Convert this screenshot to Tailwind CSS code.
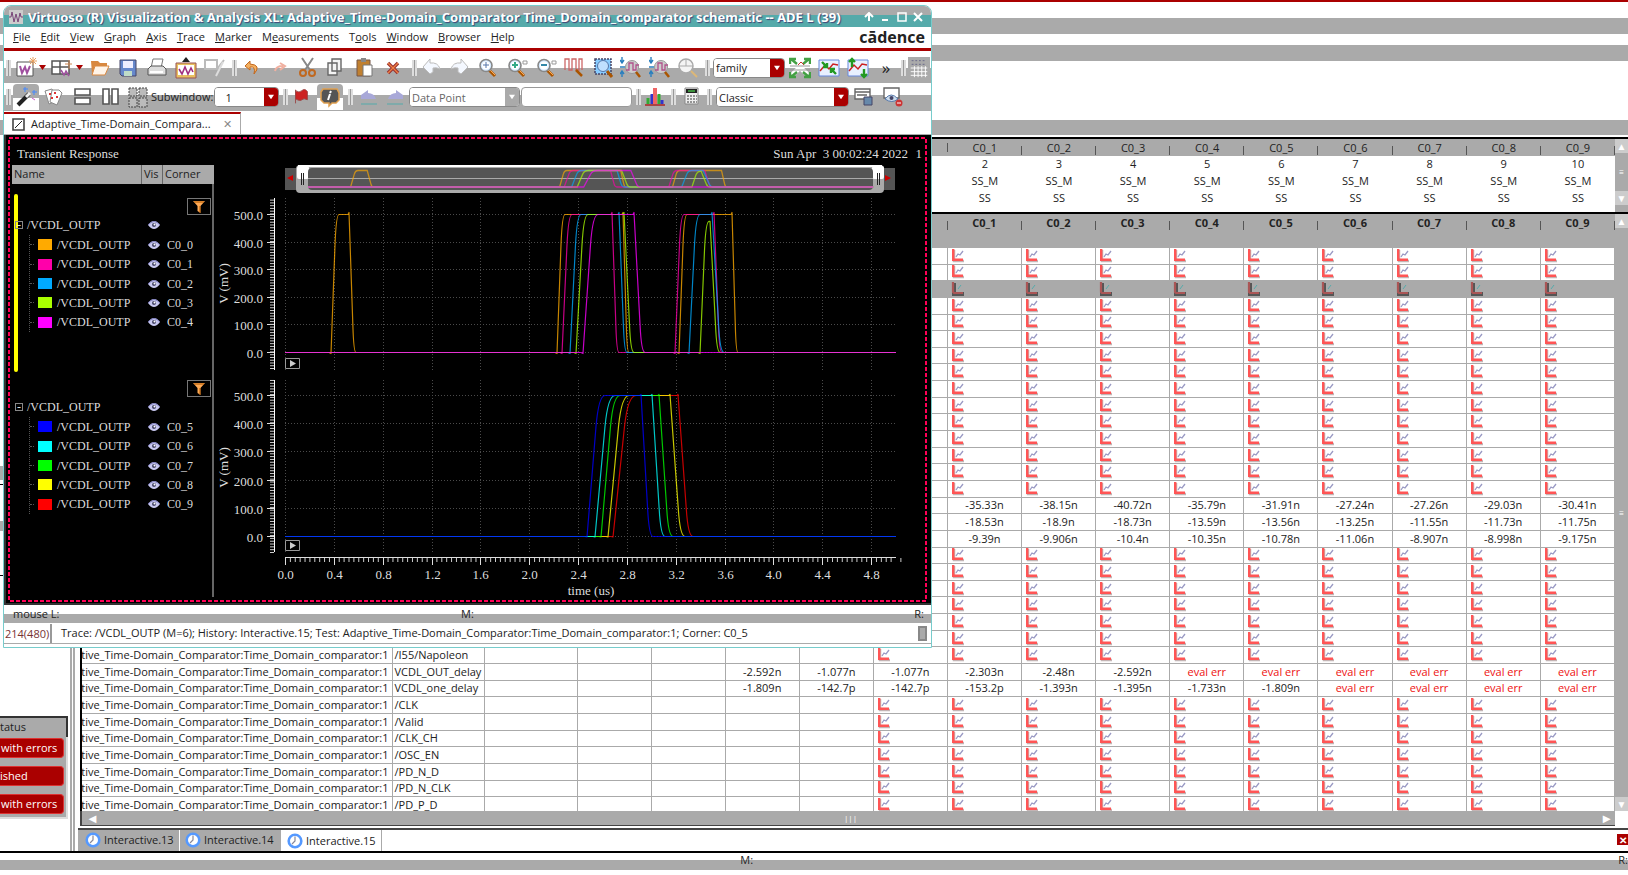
<!DOCTYPE html>
<html lang="en">
<head>
<meta charset="utf-8">
<title>Virtuoso Visualization &amp; Analysis XL</title>
<script src="https://cdn.jsdelivr.net/npm/@tailwindcss/browser@4"></script>
</head>
<body class="h-screen overflow-hidden bg-white">
<svg class="hidden">
  <symbol id="wave" viewBox="0 0 14 14"><path d="M3 1v11h10" fill="none" stroke="#c4b4b4" stroke-width="2.500"/><path d="M1 0h2.400v9.600H12V12H1z" fill="#ff5555"/><path d="M5 8l2-3 2 1 3-4" fill="none" stroke="#9a9ac4" stroke-width="1.300"/></symbol>
  <symbol id="waveSel" viewBox="0 0 14 14"><path d="M3 1v11h10" fill="none" stroke="#555" stroke-width="4"/><path d="M2 0v10l1 1h9" fill="none" stroke="#aa5555" stroke-width="2.200"/><path d="M7 7l3-4" stroke="#55aaaa"/></symbol>
  <symbol id="eye" viewBox="0 0 12 8"><path d="M0 4q6-8 12 0q-6 8-12 0" fill="#c8c8f0"/><path d="M0 4q6-7 12 0" fill="none" stroke="#7878b8"/><circle cx="6" cy="4" r="2" fill="#446"/><circle cx="6.500" cy="3.500" r="1" fill="#fff"/></symbol>
  <symbol id="funnel" viewBox="0 0 12 12"><path d="M0 0h12L7.500 5v7l-3-2V5z" fill="#ffaa55"/><path d="M7 5v7M1 1h10" stroke="#aa5500"/></symbol>
  <symbol id="clock" viewBox="0 0 16 16"><circle cx="8" cy="8" r="6.300" fill="#fff" stroke="#5599ff" stroke-width="2.600"/><path d="M8 3.500V8l-3 3" fill="none" stroke="#889" stroke-width="1.200"/></symbol>
  <symbol id="lens" viewBox="0 0 22 22"><path d="M12 13l6 6" stroke="#aa5500" stroke-width="3"/><path d="M12 12l6 6" stroke="#ffaa55"/><circle cx="9" cy="8.500" r="6" fill="#d5eaff" stroke="#888" stroke-width="1.600"/><circle cx="9" cy="8.500" r="4" fill="#fff"/></symbol>
  <symbol id="pulses" viewBox="0 0 22 22"><path d="M2 13V2h4v11h3V2h4v11h3V2h3v11" fill="none" stroke="#c66" stroke-width="1.300"/><path d="M13 13l6 6" stroke="#aa5500" stroke-width="2.500"/></symbol>
  <symbol id="pulseZoom" viewBox="0 0 22 22"><path d="M2 0v5M0 3l2 3 2-3M2 20v-5M0 17l2-3 2 3M0 10h5" fill="none" stroke="#2a7fbf" stroke-width="1.400"/><circle cx="12" cy="10" r="6.500" fill="#ccc" stroke="#999"/><path d="M6 13h3V6h4v7h3V8h3" fill="none" stroke="#b0508a" stroke-width="1.300"/><path d="M16 15l4 5" stroke="#aa5500" stroke-width="2.500"/></symbol>
</svg>

<div class="relative flex h-full flex-col bg-white font-['Open_Sans','Noto_Sans',sans-serif] text-[11px] leading-[14px] text-[#222]">
  <!-- results window -->
  <header class="shrink-0">
    <div class="h-[2px] bg-[#aa0000]"></div>
    <div class="mt-[16px] h-[16px] bg-[#aaa]"></div>
    <div class="mt-[11px] h-[16px] bg-[#aaa]"></div>
    <div class="mt-[59px] h-[15px] bg-[#aaa]"></div>
  </header>
  <main class="mt-[2px] flex min-h-0 flex-1 border-b-2 border-black">
    <aside class="flex w-[70px] shrink-0 flex-col">
      <div class="mt-[329px] h-[14px] bg-[#aaa]"></div>
      <div class="mt-[4px] h-px bg-black"></div>
      <div class="mt-[36px] h-[10px] bg-[#aaa]"></div>
      <div class="mt-[44px] h-px bg-black"></div>
      <section class="mt-auto mb-[32px] mr-[2px] flex flex-col bg-[#aaa]">
        <h2 class="h-[21px] border-t-2 border-r-2 border-[#333] pt-[2px]">tatus</h2>
        <div class="flex flex-col gap-[8px] border-r-2 border-b-2 border-[#ddd] pr-[2px] pb-[3px] pt-[1px] whitespace-nowrap text-white">
          <button class="h-[20px] rounded-r border border-l-0 border-[#d33] bg-[#aa0000] pl-px text-left">with errors</button>
          <button class="h-[20px] rounded-r border border-l-0 border-[#d33] bg-[#aa0000] text-left">ished</button>
          <button class="h-[20px] rounded-r border border-l-0 border-[#d33] bg-[#aa0000] pl-px text-left">with errors</button>
        </div>
      </section>
    </aside>
    <div class="mr-[3px] w-[5px] border-x-2 border-[#aaa]"></div>
    <section class="flex min-w-0 flex-1 flex-col">
      <div class="ml-[2px] flex h-[75px] border-t-2 border-l-2 border-black">
        <div class="min-w-0 flex-1"><table class="h-[67px] w-full table-fixed border-collapse text-center" id="corners"></table></div>
        <div class="flex w-[13px] flex-col items-center justify-between bg-[#aaa]">
          <button aria-label="Scroll up" class="w-full bg-[#ccc] text-[10px] text-white">▲</button>
          <span class="text-[8px] leading-[8px] text-white">≡</span>
          <button aria-label="Scroll down" class="mb-[7px] w-full bg-[#ccc] text-[10px] text-white">▼</button>
        </div>
      </div>
      <div class="ml-[2px] flex min-h-0 flex-1 border-t-2 border-l-2 border-black">
        <div class="min-w-0 flex-1 overflow-hidden">
          <table class="w-full table-fixed border-collapse text-center" id="resultHead"></table>
          <table class="h-[567px] w-full table-fixed border-collapse text-center" id="results"></table>
        </div>
        <div class="flex w-[13px] flex-col items-center justify-between bg-[#aaa]">
          <button aria-label="Scroll up" class="w-full bg-[#ccc] text-[10px] text-white">▲</button>
          <span class="text-[8px] leading-[8px] text-white">≡</span>
          <button aria-label="Scroll down" class="w-full bg-[#ccc] text-[10px] text-white">▼</button>
        </div>
      </div>
      <div class="ml-[2px] mr-[13px] flex h-[15px] shrink-0 items-center justify-between border-b border-l-2 border-[#444] bg-[#aaa] text-[13px] text-white">
        <button aria-label="Scroll left" class="px-[4px]">◄</button><span class="text-[8px]">|||</span><button aria-label="Scroll right" class="px-[2px]">►</button>
      </div>
      <nav class="mt-[2px] flex h-[23px] shrink-0 border-t-2 border-[#444]">
        <button class="flex w-[102px] items-center gap-[3px] border-r border-white bg-[#aaa] pb-[2px] pl-[7px]"><svg class="size-[16px] shrink-0"><use href="#clock"/></svg>Interactive.13</button>
        <button class="flex w-[101px] items-center gap-[3px] bg-[#aaa] pb-[2px] pl-[5px]"><svg class="size-[16px] shrink-0"><use href="#clock"/></svg>Interactive.14</button>
        <button class="flex w-[101px] items-center gap-[3px] border-r border-[#aaa] pl-[6px]"><svg class="size-[16px] shrink-0"><use href="#clock"/></svg>Interactive.15</button>
        <button aria-label="Close" class="mt-[4px] ml-auto flex size-[11px] items-center justify-center bg-[#aa0000] text-[10px] font-bold text-white">✕</button>
      </nav>
    </section>
  </main>
  <footer class="mb-[5px] flex h-[17px] shrink-0 items-start bg-[linear-gradient(#fff_7px,#aaa_7px)]">
    <span class="flex-1"></span><span class="w-[878px] shrink-0">M:</span><span>R:</span>
  </footer>

  <!-- graph window -->
  <article class="absolute top-[5px] left-[3px] flex h-[643px] w-[929px] flex-col overflow-hidden rounded-t-[8px] border border-[#7cc] bg-white">
    <div class="flex h-[21px] shrink-0 items-center bg-[linear-gradient(#aaa_9px,#55aaaa_9px)] pr-[8px] pl-[5px] text-white">
      <svg class="mr-[5px] size-[14px]" viewBox="0 0 14 14"><path d="M0 0h14v14H0z" fill="#ccc"/><path d="M0 7h2l1-5 2 10 2-8 2 8 2-9 1 4h2" fill="none" stroke="#747"/></svg>
      <h1 class="flex-1 overflow-hidden font-['Noto_Sans',sans-serif] text-[13px] leading-[18px] font-bold whitespace-nowrap [text-shadow:1px_1px_1px_#447]">Virtuoso (R) Visualization &amp; Analysis XL: Adaptive_Time-Domain_Comparator Time_Domain_comparator schematic -- ADE L (39)</h1>
      <div class="flex w-[67px] items-center justify-between pl-[8px]">
        <button aria-label="Shade"><svg class="size-[10px]" viewBox="0 0 10 10"><path d="M5 9V2M1 5l4-4 4 4" fill="none" stroke="#fff" stroke-width="2"/></svg></button>
        <button aria-label="Minimize"><svg class="size-[10px]" viewBox="0 0 10 10"><path d="M2 8h6" stroke="#fff" stroke-width="2"/></svg></button>
        <button aria-label="Maximize"><svg class="size-[10px]" viewBox="0 0 10 10"><path d="M1 1h8v8H1z" fill="none" stroke="#fff" stroke-width="1.500"/></svg></button>
        <button aria-label="Close"><svg class="size-[10px]" viewBox="0 0 10 10"><path d="M1 1l8 8M9 1L1 9" stroke="#fff" stroke-width="2"/></svg></button>
      </div>
    </div>
    <nav class="flex h-[24px] shrink-0 items-center gap-[10px] border-b-[3px] border-[#aa0000] pr-[6px] pb-px pl-[9px]">
      <button><u>F</u>ile</button><button><u>E</u>dit</button><button><u>V</u>iew</button><button><u>G</u>raph</button><button><u>A</u>xis</button><button><u>T</u>race</button><button><u>M</u>arker</button><button>M<u>e</u>asurements</button><button>T<u>o</u>ols</button><button><u>W</u>indow</button><button><u>B</u>rowser</button><button><u>H</u>elp</button>
      <span class="ml-auto text-[16px] leading-[16px] font-bold text-[#222]">cādence</span>
    </nav>
    <div id="bar1" class="mt-px flex h-[31px] shrink-0 items-center bg-[linear-gradient(#fff_16px,#aaa_16px)]"></div>
    <div id="bar2" class="flex h-[28px] shrink-0 items-center bg-[linear-gradient(#fff_12px,#aaa_12px)]"></div>
    <div class="mt-px flex h-[23px] shrink-0 border-b border-[#aaa]">
      <div class="flex w-[237px] items-center border-t-2 border-r border-t-[#aa0000] border-r-[#aaa] pr-[8px] pl-[8px]">
        <svg class="mr-[6px] size-[13px]" viewBox="0 0 13 13"><path d="M1 1h11v11H1z" fill="#fff" stroke="#444" stroke-width="1.600"/><path d="M3 10l7-7" stroke="#222"/></svg>
        <span class="flex-1">Adaptive_Time-Domain_Compara...</span>
        <button aria-label="Close tab" class="text-[11px] text-[#888]">✕</button>
      </div>
    </div>
    <div class="relative flex min-h-0 flex-1 border-l-2 border-b-2 border-[#333] bg-black font-['Liberation_Serif',serif] text-[12px] text-[#ddd]">
      <svg class="pointer-events-none absolute top-[2px] left-[2px] h-[465px] w-[920px]"><rect x="1" y="1" width="917" height="463" fill="none" stroke="#ff0055" stroke-width="2" stroke-dasharray="4 2"/></svg>
      <section class="flex w-[208px] shrink-0 flex-col pl-[6px]">
        <h2 class="mt-[12px] h-[18px] pl-[5px] text-[13px]">Transient Response</h2>
        <div class="flex h-[19px] bg-[#aaa] font-['Open_Sans',sans-serif] text-[11px] leading-[17px] text-[#222]"><span class="w-[130px] border-r border-[#666] pl-[2px]">Name</span><span class="w-[21px] border-r border-[#666] pl-[2px]">Vis</span><span class="pl-[2px]">Corner</span></div>
        <div id="legend" class="flex h-[413px] flex-col border-r-2 border-[#666]"></div>
      </section>
      <svg id="plot" class="h-[468px] w-[712px]" viewBox="214 135 712 468" font-size="13" fill="#ddd"></svg>
    </div>
    <div class="flex h-[18px] shrink-0 items-start bg-[linear-gradient(#fff_9px,#aaa_9px)] pt-[2px] pr-[7px]"><span class="w-[457px] pl-[9px]">mouse L:</span><span>M:</span><span class="ml-auto">R:</span></div>
    <div class="flex h-[21px] shrink-0 items-center border-b border-[#aaa] pl-px"><span class="w-[47px] border-r-2 border-[#999] leading-[19px] text-[#733]">214(480)</span><span class="flex-1 pl-[9px]">Trace: /VCDL_OUTP (M=6); History: Interactive.15; Test: Adaptive_Time-Domain_Comparator:Time_Domain_comparator:1; Corner: C0_5</span><span class="mr-[4px] h-[15px] w-[9px] border-2 border-[#888] bg-[#aaa]"></span></div>
    <div class="h-[3px] shrink-0"></div>
  </article>
</div>

<script>
const $ = id => document.getElementById(id);
const cols = '<colgroup><col class="w-[310px]"><col class="w-[92px]"><col class="w-[93px]">' + '<col>'.repeat(14) + '</colgroup>';
const names = ['', '', '', '', '', '', '', '', 'C0_1', 'C0_2', 'C0_3', 'C0_4', 'C0_5', 'C0_6', 'C0_7', 'C0_8', 'C0_9'];

/* corner summary */
const cornerRow = f => '<tr>' + names.map((n, i) => `<td class="p-0">${i > 7 ? f(i - 6) : ''}</td>`).join('') + '</tr>';
$('corners').innerHTML = cols + '<thead><tr class="h-[17px] bg-[#aaa]">' + names.map(n => `<th class="p-0 font-normal"><div class="flex items-end"><span class="flex-1 pl-px">${n}</span><span class="h-[9px] w-px bg-[#555]"></span></div></th>`).join('') + '</tr></thead><tbody>' +
  cornerRow(i => i) + cornerRow(() => 'SS_M') + cornerRow(() => 'SS') + '</tbody>';
$('resultHead').innerHTML = cols + '<thead><tr class="bg-[#aaa]">' + names.map(n => `<th class="p-0 pb-[17px] font-bold"><div class="flex h-[16px] items-end"><span class="flex-1">${n}</span><span class="h-[9px] w-px bg-[#555]"></span></div></th>`).join('') + '</tr></thead>';

/* results */
const E = 'eval err';
const values = {
  15: [,,,,, '-35.33n', '-38.15n', '-40.72n', '-35.79n', '-31.91n', '-27.24n', '-27.26n', '-29.03n', '-30.41n'],
  16: [,,,,, '-18.53n', '-18.9n', '-18.73n', '-13.59n', '-13.56n', '-13.25n', '-11.55n', '-11.73n', '-11.75n'],
  17: [,,,,, '-9.39n', '-9.906n', '-10.4n', '-10.35n', '-10.78n', '-11.06n', '-8.907n', '-8.998n', '-9.175n'],
  25: [,, '-2.592n', '-1.077n', '-1.077n', '-2.303n', '-2.48n', '-2.592n', E, E, E, E, E, E],
  26: [,, '-1.809n', '-142.7p', '-142.7p', '-153.2p', '-1.393n', '-1.395n', '-1.733n', '-1.809n', E, E, E, E]
};
const outputs = ['/I55/Napoleon', 'VCDL_OUT_delay', 'VCDL_one_delay', '/CLK', '/Valid', '/CLK_CH', '/OSC_EN', '/PD_N_D', '/PD_N_CLK', '/PD_P_D'];
let rows = '';
for (let r = 0; r < 34; r++) {
  const sel = r === 2, named = r >= 24;
  rows += `<tr class="${sel ? 'bg-[#aaa]' : 'bg-white'}"><td class="overflow-hidden border border-l-0 border-[#aaa] p-0"><div class="flex justify-end pr-[3px] whitespace-nowrap">${named ? 'ptive_Time-Domain_Comparator:Time_Domain_comparator:1' : ''}</div></td>` +
    `<td class="border border-[#aaa] p-0 pl-[2px] text-left whitespace-nowrap">${named ? outputs[r - 24] : ''}</td><td class="border border-[#aaa] p-0"></td>`;
  for (let c = 0; c < 14; c++) {
    let v = '';
    if (values[r]) v = values[r][c] || '';
    else if (c > 3) v = `<svg class="ml-[3px] block size-[14px]"><use href="${sel ? '#waveSel' : '#wave'}"/></svg>`;
    rows += `<td class="border border-[#aaa] p-0 ${v === E ? 'text-[#ee1111]' : ''}">${v}</td>`;
  }
  rows += '</tr>';
}
$('results').innerHTML = cols + '<tbody>' + rows + '</tbody>';

/* legend */
const groups = [
  ['#ffaa00', '#ff00aa', '#00aaff', '#aaff00', '#ff00ff'],
  ['#0000ff', '#00ffff', '#00ff00', '#ffff00', '#ff0000']
];
$('legend').innerHTML = groups.map((g, k) => `
  <div class="flex ${k ? 'mt-[18px]' : 'mt-[10px]'}"><div class="w-[4px] ml-[2px] shrink-0 rounded ${k ? 'bg-black h-px' : 'bg-[#ffff00] h-[178px] -mb-[14px]'}"></div>
  <div class="-ml-[6px] flex h-[164px] flex-1 flex-col">
    <button aria-label="Filter" class="mt-[4px] mr-px flex h-[17px] w-[24px] items-center justify-center self-end border border-[#777]"><svg class="size-[12px]"><use href="#funnel"/></svg></button>
    <div class="flex h-[19px] items-center"><button aria-label="Collapse" class="ml-[3px] flex size-[8px] items-center justify-center border border-[#888] leading-[6px]">-</button><span class="ml-[4px] w-[121px]">/VCDL_OUTP</span><svg class="h-[8px] w-[12px]"><use href="#eye"/></svg></div>
    <div class="mt-px ml-[17px] flex h-[97px] flex-col border-l border-dotted border-[#555]">` +
  g.map((c, i) => `<div class="flex flex-1 items-center"><span class="mr-[4px] w-[4px] border-t border-dotted border-[#555]"></span><span class="h-[11px] w-[14px]" style="background:${c}"></span><span class="ml-[5px] w-[91px]">/VCDL_OUTP</span><svg class="h-[8px] w-[12px]"><use href="#eye"/></svg><span class="ml-[7px]">C0_${k * 5 + i}</span></div>`).join('') +
  `</div></div></div>`).join('');

/* plot */
let s = '';
const line = (x1, y1, x2, y2, c, extra = '') => s += `<path d="M${x1} ${y1}L${x2} ${y2}" stroke="${c}" fill="none" ${extra}/>`;
const text = (x, y, t, a = 'middle', extra = '') => s += `<text x="${x}" y="${y}" text-anchor="${a}" ${extra}>${t}</text>`;
text(908, 158, 'Sun Apr&#160; 3 00:02:24 2022', 'end'); text(922, 158, '1', 'end');

const X = t => Math.round(285 + t * 122.1) + .5;
const strips = [{ y0: 352.5, y5: 214.5, top: 198, bot: 370 }, { y0: 536.5, y5: 395.5, top: 380, bot: 552 }];
for (const p of strips) {
  const step = (p.y0 - p.y5) / 5;
  for (let i = 0; i <= 12; i++) line(X(i * .4), p.top, X(i * .4), p.bot, '#4a4a4a', 'stroke-dasharray="1 2"');
  for (let i = 0; i <= 5; i++) {
    const y = Math.round(p.y0 - i * step - .5) + .5;
    line(285, y, 896, y, '#4a4a4a', 'stroke-dasharray="1 2"');
    line(267, y, 274, y, '#ddd');
    text(263, y + 5, i * 100 + '.0', 'end');
  }
  line(274.5, p.top, 274.5, p.bot, '#fff');
  for (let y = p.y0 + 16; y > p.top; y -= step / 10) line(270, y, 274, y, '#ccc');
  text(0, 0, 'V (mV)', 'middle', `transform="translate(228 ${p.y0 - 69}) rotate(-90)"`);
  s += `<path d="M285.500 ${p.bot - 11.5}h14v10h-14z" fill="#000" stroke="#999"/><path d="M290 ${p.bot - 10}l6 3.500l-6 3.500z" fill="#ccc"/>`;
}
line(285, 557.5, 896, 557.5, '#ddd');
for (let i = 1; i <= 126; i++) if (i !== 125 && i % 10) line(285.5 + i * 4.884, 558, 285.5 + i * 4.884, 562, '#ccc');
for (let i = 0; i <= 12; i++) { line(X(i * .4), 558, X(i * .4), 565, '#ddd'); text(X(i * .4), 579, (i * .4).toFixed(1)); }
text(591, 595, 'time (us)');

/* each pulse: rise start, rise end, fall start, fall end, peak level */
const traces = [
  [0, '#ffaa00', [[331, 339, 349, 356], [557, 565, 623, 629], [679, 687, 732, 738]]],
  [0, '#ff00aa', [[562, 572, 612, 619], [675, 684, 714, 722]]],
  [0, '#00aaff', [[570, 581, 619, 627], [689, 700, 712, 724]]],
  [0, '#aaff00', [[576, 588, 624, 634], [700, 709, 710, 720, .95]]],
  [0, '#ff00ff', [[583, 598, 634, 645]]],
  [1, '#ff0000', [[613, 636, 678, 693]]],
  [1, '#ffff00', [[608, 629, 670, 685]]],
  [1, '#00ff00', [[601, 620, 659, 673]]],
  [1, '#00ffff', [[595, 615, 652, 665]]],
  [1, '#0000ff', [[587, 605, 641, 653]]]
];
const wave = (ps, y0, h, fx, spike) => {
  let d = `M${fx(285)} ${y0}`;
  for (const [a, b, c, e, k = 1] of ps) {
    const t = y0 - h * k, w = b - a, v = e - c, m = a + w * .5, n = c + v * .55;
    d += `H${fx(a - 2)}L${fx(a)} ${y0 + spike / 2}L${fx(m)} ${y0 - h * k * .78}Q${fx(m + w * .15)} ${t} ${fx(b)} ${t}H${fx(c - 1)}L${fx(c)} ${t - (k < 1 ? 0 : spike)}L${fx(n)} ${y0 - h * .2}Q${fx(n + v * .12)} ${y0} ${fx(e)} ${y0}`;
  }
  return d + `H${fx(896)}`;
};
for (const [k, c, ps] of traces) s += `<path d="${wave(ps, strips[k].y0, strips[k].y0 - strips[k].y5, x => x, k ? 1 : 2)}" fill="none" stroke="${c}" stroke-width="1.200" stroke-linejoin="round" opacity=".78"/>`;

/* range slider */
s += '<rect x="285" y="168" width="610" height="22" fill="#555"/><rect x="296" y="165" width="588" height="28" rx="4" fill="#aaa"/><rect x="298" y="165" width="584" height="2" fill="#fff"/><rect x="297" y="166" width="12" height="13" rx="2" fill="#fff"/><rect x="872" y="166" width="12" height="13" rx="2" fill="#fff"/><rect x="308" y="168" width="565" height="22" rx="4" fill="#555"/><path d="M308 178.500h565" stroke="#aaa"/><path d="M301.500 173v12M303.500 173v12M877.500 173v12M879.500 173v12" stroke="#222"/><path d="M293 175v6l-6-3zM885 175v6l6-3z" fill="#cc0000"/>';
for (const [k, c, ps] of traces) if (!k) s += `<path d="${wave(ps, 187, 16.5, x => (308 + (x - 285) * .925).toFixed(1), 0)}" fill="none" stroke="${c}" opacity=".65" stroke-width="1.300"/>`;
$('plot').innerHTML = s;

/* toolbars */
const svg = (b, vb = '0 0 22 22') => `<svg class="size-[22px]" viewBox="${vb}">${b}</svg>`;
const use = id => svg(`<use href="#${id}"/>`);
const btn = (label, icon, w) => `<button aria-label="${label}" class="${w || 'w-[29px]'} flex shrink-0 items-center justify-center">${icon}</button>`;
const handle = (w = 'w-[11px]') => `<span class="${w} flex shrink-0 justify-center"><span class="h-[16px] w-[5px] border-x-2 border-[#ddd] bg-[#999]"></span></span>`;
const drop = () => `<button aria-label="More" class="flex w-[9px] shrink-0 justify-center"><svg class="size-[7px]" viewBox="0 0 7 7"><path d="M0 1h7L3.500 6z" fill="#aa0000"/></svg></button>`;
const select = (label, v, w, red = true) => `<span class="${w} flex h-[20px] shrink-0 overflow-hidden rounded border border-[#888] bg-white"><select aria-label="${label}" class="min-w-0 flex-1 appearance-none bg-white pl-[2px] text-[11px] leading-[17px] ${red ? 'text-[#222]' : 'text-[#666]'}"><option>${v}</option></select><span class="${red ? 'bg-[#aa0000]' : 'bg-[#aaa]'} flex w-[14px] items-center justify-center"><svg class="size-[6px]" viewBox="0 0 7 7"><path d="M0 1h7L3.500 6z" fill="#fff"/></svg></span></span>`;
const arrowBox = (p, c = '#229922') => `<path d="M1 3h20v16H1z" fill="#e8f0ff" stroke="#6688dd"/><path d="M2 14l5-6 4 4 4-5 5 1" fill="none" stroke="#c22" stroke-width="1.500"/><path d="${p}" fill="none" stroke="${c}" stroke-width="2.400"/>`;

$('bar1').innerHTML =
  handle('w-[9px]') +
  btn('New window', svg('<path d="M2 5h16v14H2z" fill="#fff" stroke="#555"/><path d="M5 9l2 7 3-6 2 6 3-7" fill="none" stroke="#a050a0" stroke-width="2"/><path d="M18 0v8M14 4h8M15 1l6 6M21 1l-6 6" stroke="#e8a060"/>'), 'w-[25px]') + drop() +
  btn('New subwindow', svg('<path d="M2 4h17v13H2zM2 10h17M10 4v13" fill="#fff" stroke="#555" stroke-width="1.500"/><path d="M11 13l3 5 2-4 3 5" fill="none" stroke="#a050a0" stroke-width="1.500"/><path d="M19 3v9M15 7h7" stroke="#c85"/>'), 'w-[28px]') + drop() +
  btn('Open', svg('<path d="M3 4h7l2 2h7v3H7L4 17z" fill="#d88840"/><path d="M7 9h14l-4 9H4z" fill="#fff4e8" stroke="#d88840"/>')) +
  btn('Save', svg('<path d="M3 3h16v16H5l-2-2z" fill="#6688cc" stroke="#446"/><path d="M6 4h10v7H6z" fill="#eef"/><path d="M7 14h8v5H7z" fill="#bfdcc8"/>')) +
  btn('Print', svg('<path d="M7 2h10l-2 9H5z" fill="#fff" stroke="#777"/><path d="M2 12l3-3h12l3 3v6H2z" fill="#ddd" stroke="#555"/><path d="M4 15h13" stroke="#fff" stroke-width="2"/>')) +
  btn('Save image', svg('<path d="M11 0l4 5H7z" fill="#222"/><path d="M1 6h20v15H1z" fill="#e8c060" stroke="#955"/><path d="M3 8h16v10H3z" fill="#fff"/><path d="M4 12l3 5 3-7 3 7 3-6 2 4" fill="none" stroke="#a03080" stroke-width="1.600"/>')) +
  btn('Annotate', svg('<path d="M1 3h12v9H1zM13 12l7-9" fill="none" stroke="#bbb" stroke-width="2"/><path d="M12 19l7-14" stroke="#ddd" stroke-width="2"/>')) +
  handle('w-[10px]') +
  btn('Undo', svg('<path d="M9 4L4 9l5 4V10q6-1 4 7q8-9-4-10z" fill="#f4b060" stroke="#c06820"/>'), 'w-[25px]') +
  btn('Redo', svg('<path d="M6 14q1-5 8-5M11 6l5 3-5 4" fill="none" stroke="#f0b0a0" stroke-width="2"/>'), 'w-[32px]') +
  btn('Cut', svg('<path d="M5 1l8 12M16 1L8 13" stroke="#888" stroke-width="2"/><circle cx="6" cy="16" r="3" fill="none" stroke="#c06820" stroke-width="2"/><circle cx="15" cy="16" r="3" fill="none" stroke="#c06820" stroke-width="2"/>'), 'w-[24px]') +
  btn('Copy', svg('<path d="M8 2h9v12H8zM4 6h9v12H4z" fill="#f4f4f4" stroke="#666" stroke-width="1.400"/>')) +
  btn('Paste', svg('<path d="M4 3h13v16H4z" fill="#c08030" stroke="#754"/><path d="M8 1h5v4H8z" fill="#888"/><path d="M10 8h9v11h-9z" fill="#fff" stroke="#777"/>')) +
  btn('Delete', svg('<path d="M6 6l10 10M16 6L6 16" stroke="#933" stroke-width="3.500"/><path d="M6 6l10 10M16 6L6 16" stroke="#f08040" stroke-width="1.300"/>')) +
  handle('w-[14px]') +
  btn('Previous view', svg('<path d="M2 10l7-8v4q8-1 10 6-4-2-7-1v4l-3 2z" fill="#f4f8ff" stroke="#bbb"/>'), 'w-[22px]') +
  btn('Next view', svg('<path d="M20 10l-7-8v4q-8-1-10 6 4-2 7-1v4l3 2z" fill="#f4f8ff" stroke="#bbb"/>'), 'w-[31px]') +
  btn('Fit', svg('<use href="#lens"/><path d="M6 8h6M9 5v6" stroke="#57a"/>'), 'w-[28px]') +
  btn('Zoom in', svg('<use href="#lens"/><path d="M6 8h6M9 5v6" stroke="#3a8" stroke-width="2"/><path d="M17 4h4v3h-4z" fill="none" stroke="#999"/>')) +
  btn('Zoom out', svg('<use href="#lens"/><path d="M6 8h6" stroke="#38a" stroke-width="2"/><path d="M17 4h4v3h-4z" fill="none" stroke="#999"/>')) +
  btn('Zoom X', use('pulses'), 'w-[28px]') +
  btn('Zoom area', svg('<path d="M3 2h16v15H3z" fill="#8cf" stroke="#446" stroke-dasharray="2 1" stroke-width="1.500"/><circle cx="11" cy="9" r="5.500" fill="#bfe0ff" stroke="#57a"/><path d="M15 14l5 6" stroke="#aa5500" stroke-width="3"/>')) +
  btn('Zoom Y in', use('pulseZoom'), 'w-[28px]') + btn('Zoom Y out', use('pulseZoom')) +
  btn('Inspect', svg('<circle cx="9" cy="9" r="7" fill="#f4f4f4" stroke="#aaa" stroke-width="1.500"/><path d="M2 9h14M9 2v7" stroke="#aaa"/><path d="M14 14l6 6" stroke="#ddb878" stroke-width="2"/>'), 'w-[28px]') +
  handle('w-[11px]') + select('Group by', 'family', 'w-[72px]') +
  btn('Expand', svg('<path d="M3 3l16 15M19 3L3 18" stroke="#fff" stroke-width="5"/><path d="M1 9h20M1 13h20" stroke="#999"/><path d="M2 2l6 5M20 2l-6 5M2 20l6-5M20 20l-6-5M1 7V2h6M21 7V2h-6M1 15v5h6M21 15v5h-6" fill="none" stroke="#44a044" stroke-width="2.400"/><path d="M9 8l3-3 3 3" fill="none" stroke="#c33"/>')) +
  btn('Fit both', svg(arrowBox('M4 5l5 5M18 17l-5-5M9 6v4H5M13 16v-4h4'))) +
  btn('Fit vertical', svg(arrowBox('M5 10V2M2 5l3-3 3 3M17 12v8M14 17l3 3 3-3'))) +
  `<button aria-label="More tools" class="w-[28px] shrink-0 text-[17px]">»</button>` + handle('w-[7px]') +
  btn('Grid', svg('<path d="M0 0h24v24H0z" fill="#aaa"/><path d="M3 12h18M3 16h18M3 20h18M7 10v12M11 10v12M15 10v12M19 10v12" stroke="#fff"/><path d="M4 4h2M8 4h2M12 4h2M16 4h2M4 8h2M8 8h2M12 8h2M16 8h2" stroke="#668"/>', '0 0 24 24'), 'w-[24px]');

$('bar2').innerHTML =
  handle('w-[9px]') +
  btn('Wizard', svg('<path d="M3 19L14 8" stroke="#222" stroke-width="4"/><path d="M11 11l4-4" stroke="#eee" stroke-width="3"/><path d="M10 1v5M8 3h5M19 4v5M17 6h5" stroke="#48f"/><path d="M17 12l3 2" stroke="#c5c"/>'), 'h-[26px] w-[26px] rounded-t bg-[linear-gradient(#aaa_14px,#fff_14px)]') +
  btn('Cards', svg('<path d="M2 5l7-2 4 12-7 3z" fill="#fff" stroke="#888"/><path d="M9 4h7l3 3-5 12-7-3z" fill="#fff" stroke="#888"/><path d="M6 8h2M11 7h2M13 11h2M8 12h2" stroke="#d33" stroke-width="2"/>')) +
  btn('Rows', svg('<path d="M3 3h15v6H3zM3 12h15v6H3z" fill="#fff" stroke="#555" stroke-width="1.600"/>')) +
  btn('Columns', svg('<path d="M3 3h6v15H3zM12 3h6v15h-6z" fill="#fff" stroke="#555" stroke-width="1.600"/>'), 'w-[28px]') +
  btn('Tiles', svg('<path d="M2 2h8v8H2zM12 2h8v8h-8zM2 12h8v9H2zM12 12h8v9h-8z" fill="#bbb" stroke="#444" stroke-dasharray="2 1"/>'), 'w-[26px]') +
  `<label for="sub" class="w-[63px] shrink-0">Subwindow:</label>` +
  select('Subwindow', '&nbsp;&nbsp;&nbsp;1', 'w-[65px]').replace('<select', '<select id="sub"') + handle('w-[12px]') +
  btn('Flag', svg('<path d="M5 4q4 3 7 0t6 1v9q-4-2-6 0t-7-1zM5 3v15" fill="#c22" stroke="#944"/>'), 'w-[20px]') +
  btn('Info', svg('<path d="M4 3h14l2 4v7l-3 3h-4l-3 3v-3H5l-3-3V6z" fill="#555" stroke="#e0a050" stroke-width="1.500"/><path d="M12 5l-1 2M11 8l-2 6" stroke="#fff" stroke-width="2"/>'), 'ml-[6px] h-[26px] w-[26px] rounded-t bg-[linear-gradient(#aaa_14px,#fff_14px)]') +
  handle('w-[14px]') +
  btn('Previous edge', svg('<path d="M3 9l7-5v3q6 0 8 6H3" fill="#a8a8d8"/><path d="M3 18h16" stroke="#55aaaa"/>'), 'w-[24px]') +
  btn('Next edge', svg('<path d="M19 9l-7-5v3q-6 0-8 6h15" fill="#a8a8d8"/><path d="M3 18h16" stroke="#55aaaa"/>'), 'w-[28px]') +
  select('Point type', 'Data Point', 'w-[111px]', false) +
  `<input aria-label="Value" class="ml-px h-[20px] w-[111px] shrink-0 rounded border border-[#999] bg-white px-1">` + handle('w-[12px]') +
  btn('Histogram', svg('<path d="M1 19h20" stroke="#a44" stroke-width="2"/><path d="M4 18v-6M15 18V8" stroke="#3a3" stroke-width="3"/><path d="M8 18V8M18 18v-4" stroke="#33c" stroke-width="3"/><path d="M11 18V2" stroke="#e66" stroke-width="4"/>'), 'w-[22px]') +
  handle('w-[14px]') +
  btn('Calculator', svg('<path d="M5 2h13v16H5z" fill="#eee" stroke="#888"/><path d="M6 3h11v4H6z" fill="#222"/><path d="M8 5h7" stroke="#5f5"/><path d="M7 10h10M7 13h10M7 16h10" stroke="#777" stroke-dasharray="2 1" stroke-width="1.500"/>'), 'w-[22px]') +
  handle('w-[14px]') + select('Workspace', 'Classic', 'w-[133px]') +
  btn('Save workspace', svg('<path d="M2 3h15v10H2zM2 6h15M4 9h10" fill="#fff" stroke="#666" stroke-width="1.400"/><path d="M11 11h8v8h-8z" fill="#68a" stroke="#446"/>')) +
  btn('Delete workspace', svg('<path d="M2 2h15v10H2z" fill="#fff" stroke="#666" stroke-width="1.400"/><path d="M3 13q6-8 13 0q-6 5-13 0" fill="#cde" stroke="#57a"/><circle cx="9.500" cy="12" r="2" fill="#446"/><circle cx="17" cy="17" r="3.500" fill="#c33"/><path d="M15 17h4" stroke="#fff"/>'));
</script>
</body>
</html>
